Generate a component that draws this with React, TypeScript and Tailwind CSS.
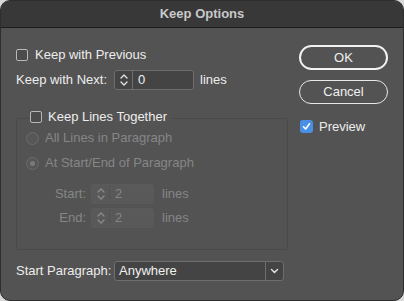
import React from "react";

const font = { fontFamily: '"Liberation Sans", Arial, sans-serif' };

const Chevrons = ({ dim }: { dim?: boolean }) => (
  <svg width="10" height="16" viewBox="0 0 10 16" fill="none">
    <path
      d="M2 6 L5 3 L8 6"
      stroke={dim ? "#8a8a8a" : "#e6e6e6"}
      strokeWidth="1.3"
      strokeLinecap="round"
      strokeLinejoin="round"
    />
    <path
      d="M2 10 L5 13 L8 10"
      stroke={dim ? "#8a8a8a" : "#e6e6e6"}
      strokeWidth="1.3"
      strokeLinecap="round"
      strokeLinejoin="round"
    />
  </svg>
);

const Checkbox = ({ checked }: { checked?: boolean }) =>
  checked ? (
    <span className="flex h-[13px] w-[13px] items-center justify-center rounded-[3px] bg-[#4a8fe6]">
      <svg width="9" height="9" viewBox="0 0 9 9" fill="none">
        <path d="M1.5 4.8 L3.6 7 L7.5 1.8" stroke="#fff" strokeWidth="1.6" strokeLinecap="round" strokeLinejoin="round" />
      </svg>
    </span>
  ) : (
    <span className="h-[12px] w-[12px] rounded-[2px] border border-[#b8b8b8] bg-[#4c4c4c]" />
  );

const Radio = ({ selected }: { selected?: boolean }) => (
  <span className="flex h-[13px] w-[13px] items-center justify-center rounded-full border border-[#6c6c6c] bg-[#575757]">
    {selected && <span className="h-[5px] w-[5px] rounded-full bg-[#7a7a7a]" />}
  </span>
);

const Spinner = ({ value, width, disabled }: { value: string; width: string; disabled?: boolean }) => (
  <div
    className={`flex h-[20px] ${width} rounded-[3px] border ${
      disabled ? "border-[#5a5a5a] bg-[#595959]" : "border-[#6e6e6e] bg-[#444444]"
    }`}
  >
    <div
      className={`flex w-[18px] items-center justify-center border-r ${
        disabled ? "border-[#535353]" : "border-[#6e6e6e]"
      }`}
    >
      <Chevrons dim={disabled} />
    </div>
    <span className={`flex items-center pl-[5px] text-[13px] ${disabled ? "text-[#858585]" : "text-[#f0f0f0]"}`}>
      {value}
    </span>
  </div>
);

export default function App() {
  return (
    <div className="h-[301px] w-[404px] bg-[#d9d9d9]" style={font}>
      <div className="flex h-[301px] w-[404px] flex-col overflow-hidden rounded-[10px] border border-[#2e2e2e] bg-[#535353]">
        <div className="flex h-[27px] items-center justify-center border-b border-[#1c1c1c] bg-[#383838]">
          <span className="text-[13px] font-bold text-[#c8c8c8]">Keep Options</span>
        </div>

        <div className="flex pt-[17px] pl-[15px]">
          {/* left column */}
          <div className="flex w-[272px] flex-col">
            <div className="flex h-[20px] items-center gap-[7px]">
              <Checkbox />
              <span className="text-[13px] text-[#ededed]">Keep with Previous</span>
            </div>

            <div className="mt-[5px] flex h-[20px] items-center">
              <span className="w-[98px] text-[13px] text-[#ededed]">Keep with Next:</span>
              <Spinner value="0" width="w-[80px]" />
              <span className="ml-[6px] text-[13px] text-[#ededed]">lines</span>
            </div>

            <div className="relative mt-[28px] h-[132px] rounded-[2px] border border-[#4a4a4a]">
              <div className="absolute left-[13px] top-[-10px] flex h-[16px] items-center gap-[6px] bg-[#535353] pr-[5px]">
                <Checkbox />
                <span className="text-[13px] text-[#ededed]">Keep Lines Together</span>
              </div>

              <div className="flex flex-col pl-[9px] pt-[9px]">
                <div className="flex h-[20px] items-center gap-[6px]">
                  <Radio />
                  <span className="text-[13px] text-[#868686]">All Lines in Paragraph</span>
                </div>
                <div className="mt-[5px] flex h-[20px] items-center gap-[6px]">
                  <Radio selected />
                  <span className="text-[13px] text-[#868686]">At Start/End of Paragraph</span>
                </div>
              </div>

              <div className="mt-[11px] flex h-[20px] items-center">
                <span className="w-[69px] text-right text-[13px] text-[#868686]">Start:</span>
                <div className="ml-[5px]">
                  <Spinner value="2" width="w-[63px]" disabled />
                </div>
                <span className="ml-[8px] text-[13px] text-[#868686]">lines</span>
              </div>
              <div className="mt-[4px] flex h-[20px] items-center">
                <span className="w-[69px] text-right text-[13px] text-[#868686]">End:</span>
                <div className="ml-[5px]">
                  <Spinner value="2" width="w-[63px]" disabled />
                </div>
                <span className="ml-[8px] text-[13px] text-[#868686]">lines</span>
              </div>
            </div>

            <div className="mt-[11px] flex h-[20px] items-center">
              <span className="w-[98px] text-[13px] text-[#ededed]">Start Paragraph:</span>
              <div className="flex h-[20px] w-[170px] rounded-[3px] border border-[#6e6e6e] bg-[#444444]">
                <span className="flex flex-1 items-center pl-[4px] text-[13px] text-[#f0f0f0]">Anywhere</span>
                <div className="flex w-[18px] items-center justify-center border-l border-[#6e6e6e]">
                  <svg width="9" height="6" viewBox="0 0 9 6" fill="none">
                    <path d="M1.5 1.5 L4.5 4.5 L7.5 1.5" stroke="#e6e6e6" strokeWidth="1.4" strokeLinecap="round" strokeLinejoin="round" />
                  </svg>
                </div>
              </div>
            </div>
          </div>

          {/* right column */}
          <div className="ml-[11px] flex w-[89px] flex-col">
            <button className="flex h-[25px] items-center justify-center rounded-full border-2 border-[#f2f2f2] text-[13px] text-[#f0f0f0]">
              OK
            </button>
            <button className="mt-[10px] flex h-[24px] items-center justify-center rounded-full border border-[#e8e8e8] text-[13px] text-[#f0f0f0]">
              Cancel
            </button>
            <div className="mt-[13px] flex items-center gap-[6px] pl-[1px]">
              <Checkbox checked />
              <span className="text-[13px] text-[#ededed]">Preview</span>
            </div>
          </div>
        </div>
      </div>
    </div>
  );
}
